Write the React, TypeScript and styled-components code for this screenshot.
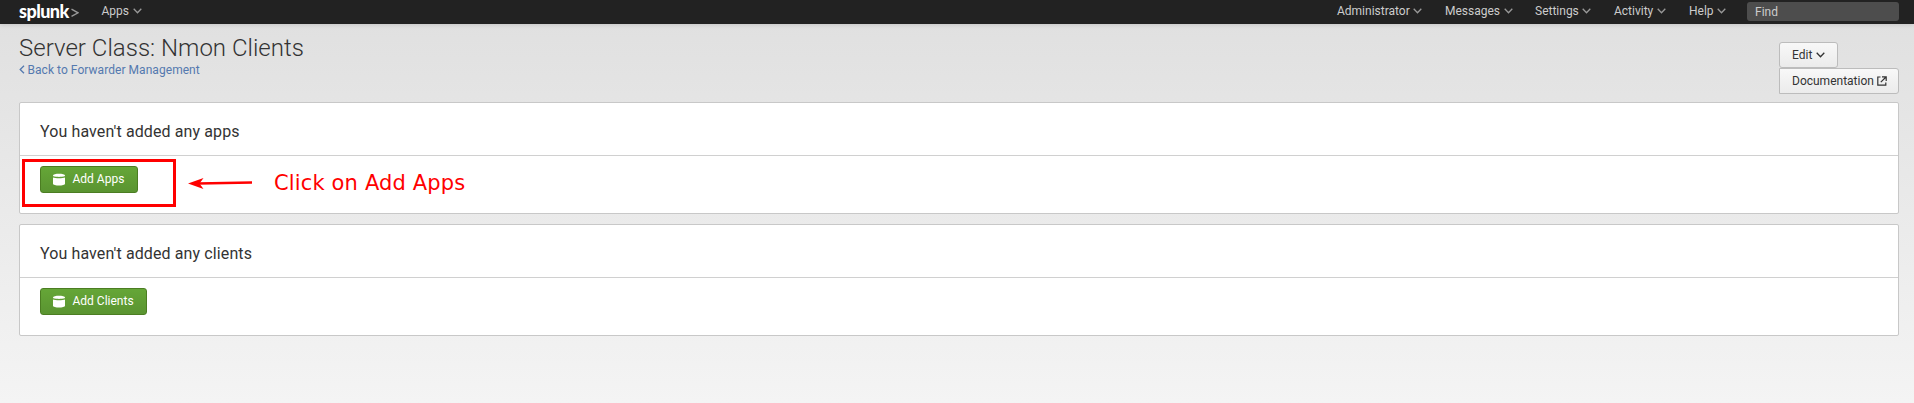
import React from 'react';
import styled, { createGlobalStyle, css } from 'styled-components';

const GlobalStyle = createGlobalStyle`
  * { box-sizing: border-box; }
  html { height: 100%; }
  body {
    margin: 0;
    min-height: 100%;
    background: linear-gradient(#dfdfdf, #f4f4f4) no-repeat;
    font: 12px/20px Roboto, "Liberation Sans", sans-serif;
    color: #333;
  }
`;

const NavBar = styled.header`
  display: flex;
  height: 24px;
  padding: 0 15px 0 19px;
  background: #222;
  box-shadow: 0 1px 4px rgba(0, 0, 0, 0.12);
`;

const Logo = styled.a`
  display: flex;
  width: 82.5px;
  font: 900 18px/22px Lato, sans-serif;
  letter-spacing: -0.55px;
  color: #fff;
`;

const LogoMark = styled.svg`
  width: 8px;
  height: 10px;
  margin: 8px 0 0 2px;
`;

const NavItem = styled.a<{ $width?: number }>`
  display: flex;
  align-items: flex-start;
  gap: 3.5px;
  width: ${(p) => (p.$width ? `${p.$width}px` : 'auto')};
  color: #ccc;
  line-height: 22px;
`;

const Spacer = styled.div`
  flex: 1;
`;

const ChevronIcon = styled.svg<{ $top: number }>`
  width: 9px;
  height: 6px;
  margin-top: ${(p) => p.$top}px;
  fill: none;
`;

const FindBox = styled.div`
  width: 152px;
  height: 19px;
  margin-top: 2px;
  padding-left: 8px;
  border-radius: 3px;
  background: #4d4d4d;
  color: #ccc;
  line-height: 20px;
`;

const PageHeader = styled.section`
  display: flex;
  justify-content: space-between;
  height: 78px;
  padding: 0 15px 0 19px;
`;

const Title = styled.h1`
  margin: 10px 0 0;
  font-size: 24px;
  font-weight: 300;
  line-height: 28px;
  letter-spacing: 0.02px;
  color: #333;
`;

const BackLink = styled.a`
  display: flex;
  align-items: flex-start;
  gap: 2.5px;
  line-height: 16px;
  letter-spacing: 0.05px;
  color: #5479af;
`;

const BackIcon = styled.svg`
  width: 6px;
  height: 9px;
  margin-top: 3px;
`;

const Actions = styled.div`
  display: flex;
  flex-direction: column;
  align-items: flex-start;
  width: 120px;
  padding-top: 18px;
`;

const Button = styled.button<{ $attached?: boolean }>`
  display: flex;
  align-items: flex-start;
  gap: 4px;
  height: 26px;
  padding: 0 12px;
  border: 1px solid #bcbcbc;
  border-radius: ${(p) => (p.$attached ? '0 3px 3px 0' : '3px')};
  background: linear-gradient(#f8f8f8, #ebebeb);
  font: inherit;
  line-height: 24px;
  color: #333;
  white-space: nowrap;
  ${(p) =>
    p.$attached &&
    css`
      width: 100%;
      gap: 3px;
    `}
`;

const ExternalIcon = styled.svg`
  width: 10px;
  height: 10px;
  margin-top: 7px;
  flex: none;
`;

const Panel = styled.section`
  position: relative;
  height: 112px;
  margin: 0 15px 10px 19px;
  border: 1px solid #c8c8c8;
  border-radius: 2px;
  background: #fff;
`;

const PanelTitle = styled.h2`
  height: 53px;
  margin: 0;
  padding: 17px 20px 0;
  border-bottom: 1px solid #d0d0d0;
  font-size: 16px;
  font-weight: 400;
  line-height: 24px;
  letter-spacing: 0.11px;
`;

const PrimaryButton = styled.button`
  display: flex;
  gap: 7.5px;
  height: 27px;
  margin: 10px 0 0 20px;
  padding: 0 12.5px 0 12px;
  border: 1px solid #4b7d22;
  border-radius: 3px;
  background: linear-gradient(#65a637, #5a9431);
  font: inherit;
  line-height: 24px;
  color: #fff;
  white-space: nowrap;
`;

const DatabaseIcon = styled.svg`
  width: 12px;
  height: 13px;
  margin-top: 6px;
`;

const Highlight = styled.div`
  position: absolute;
  left: 2px;
  top: 56px;
  width: 154px;
  height: 48px;
  border: 3px solid #f00;
`;

const Callout = styled.div`
  position: absolute;
  left: 168px;
  top: 66px;
  display: flex;
  align-items: center;
  gap: 20px;
  color: #f00;
  font: 21px/28px "DejaVu Sans", sans-serif;
  letter-spacing: 0.15px;
  white-space: nowrap;
`;

const Arrow = styled.svg`
  width: 66px;
  height: 14px;
`;

function Chevron({ top = 8, color = '#999' }: { top?: number; color?: string }) {
  return (
    <ChevronIcon $top={top} viewBox="0 0 9 6">
      <path d="M.7 .8 4.5 4.7 8.3 .8" stroke={color} strokeWidth="1.3" />
    </ChevronIcon>
  );
}

function AddButton({ label }: { label: string }) {
  return (
    <PrimaryButton>
      <DatabaseIcon viewBox="0 0 12 13" fill="#fff">
        <path d="M0 2.8C0 .2 12 .2 12 2.8 12 4.3 0 4.3 0 2.8Z" />
        <path d="M0 4.4C2 5.5 10 5.5 12 4.4V10.8C12 13.2 0 13.2 0 10.8Z" />
      </DatabaseIcon>
      {label}
    </PrimaryButton>
  );
}

const menus = [
  { label: 'Administrator', width: 108 },
  { label: 'Messages', width: 90 },
  { label: 'Settings', width: 79 },
  { label: 'Activity', width: 75 },
  { label: 'Help', width: 58 },
];

export default function App() {
  return (
    <>
      <GlobalStyle />
      <NavBar>
        <Logo>
          splunk
          <LogoMark viewBox="0 0 8 10">
            <path d="M.5 1.2 7 4.8 .5 8.4" fill="none" stroke="#999" strokeWidth="1.4" />
          </LogoMark>
        </Logo>
        <NavItem>
          Apps
          <Chevron />
        </NavItem>
        <Spacer />
        {menus.map((m) => (
          <NavItem key={m.label} $width={m.width}>
            {m.label}
            <Chevron />
          </NavItem>
        ))}
        <FindBox>Find</FindBox>
      </NavBar>
      <PageHeader>
        <div>
          <Title>Server Class: Nmon Clients</Title>
          <BackLink>
            <BackIcon viewBox="0 0 6 9">
              <path d="M5 .7 1.2 4.5 5 8.3" fill="none" stroke="#5479af" strokeWidth="1.3" />
            </BackIcon>
            Back to Forwarder Management
          </BackLink>
        </div>
        <Actions>
          <Button>
            Edit
            <Chevron top={9} color="#333" />
          </Button>
          <Button $attached>
            Documentation
            <ExternalIcon viewBox="0 0 10 10" fill="none" stroke="#333" strokeWidth="1.2">
              <path d="M3.5 1H.8V9.2H8.8V6.5M3.8 6.2 8.5 1.5M5 .8H9.2V5" />
            </ExternalIcon>
          </Button>
        </Actions>
      </PageHeader>
      <Panel>
        <PanelTitle>You haven't added any apps</PanelTitle>
        <AddButton label="Add Apps" />
        <Highlight />
        <Callout>
          <Arrow viewBox="0 0 66 14">
            <path d="M10 7.5 64 6.5" stroke="#f00" strokeWidth="2.6" />
            <path d="M0 7.5 15.5 2 11.5 7.5 15.5 13Z" fill="#f00" />
          </Arrow>
          Click on Add Apps
        </Callout>
      </Panel>
      <Panel>
        <PanelTitle>You haven't added any clients</PanelTitle>
        <AddButton label="Add Clients" />
      </Panel>
    </>
  );
}
